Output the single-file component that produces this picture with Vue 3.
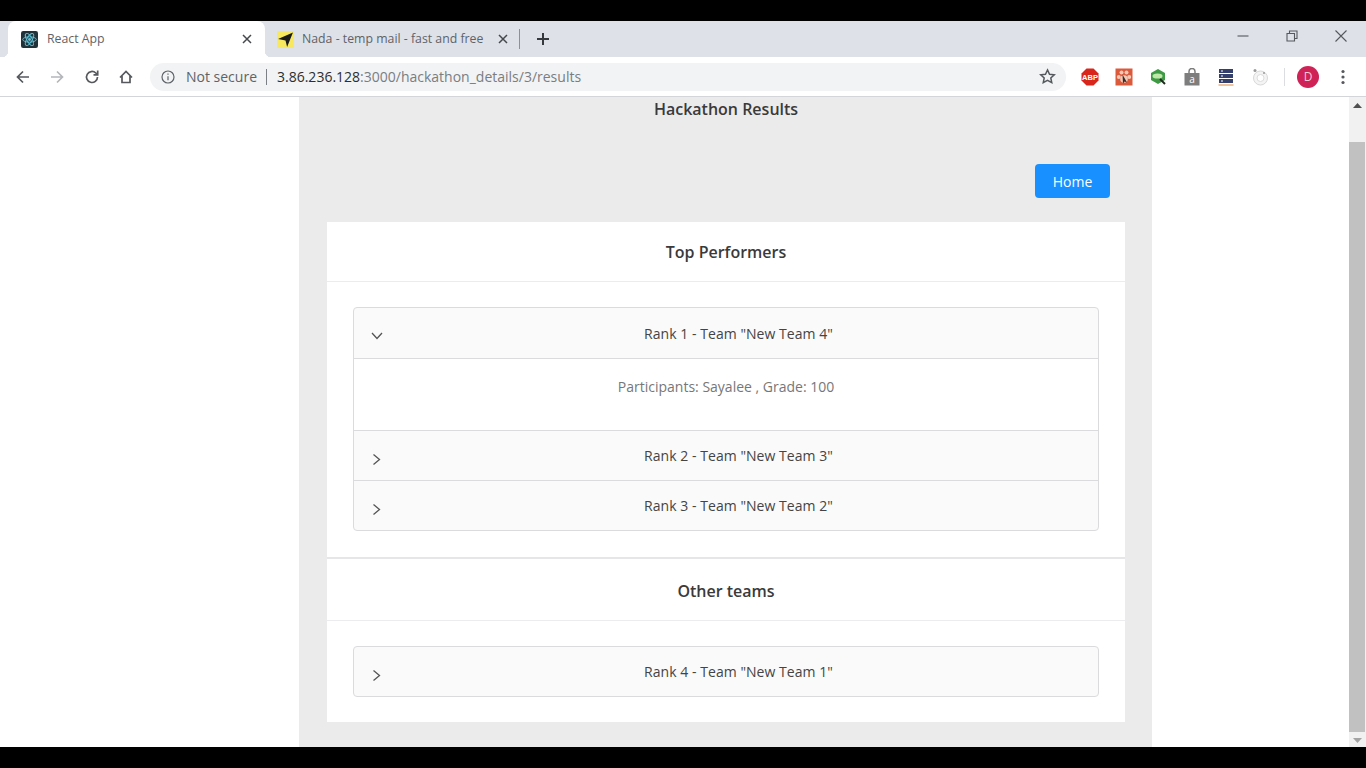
<template>
  <div class="screen">
    <div class="black-bar"></div>

    <div class="tab-strip">
      <div class="tab-edge"></div>
      <div class="tab active">
        <svg class="favicon" viewBox="0 0 16 16">
          <rect width="16" height="16" rx="2" fill="#20323a" />
          <g fill="none" stroke="#5fc3d8" stroke-width="0.9">
            <ellipse cx="8" cy="8" rx="6.4" ry="2.5" />
            <ellipse cx="8" cy="8" rx="6.4" ry="2.5" transform="rotate(60 8 8)" />
            <ellipse cx="8" cy="8" rx="6.4" ry="2.5" transform="rotate(120 8 8)" />
          </g>
          <circle cx="8" cy="8" r="1.4" fill="#5fc3d8" />
        </svg>
        <span class="tab-title">React App</span>
        <svg class="tab-close" viewBox="0 0 10 10"><path d="M1 1l8 8M9 1l-8 8" /></svg>
      </div>
      <div class="tab second">
        <svg class="favicon" viewBox="0 0 16 16">
          <rect width="16" height="16" fill="#f7e85f" />
          <path d="M1 7.500L15 1.500L9.500 15L8 9z" fill="#1b1b1b" />
        </svg>
        <span class="tab-title">Nada - temp mail - fast and free</span>
        <svg class="tab-close" viewBox="0 0 10 10"><path d="M1 1l8 8M9 1l-8 8" /></svg>
      </div>
      <div class="tab-sep"></div>
      <svg class="new-tab" viewBox="0 0 14 14"><path d="M7 1v12M1 7h12" /></svg>
      <div class="window-btns">
        <svg viewBox="0 0 12 12"><path d="M0.500 6h11" /></svg>
        <svg viewBox="0 0 12 12"><path d="M1 3.500h7.500v7.500H1zM3.500 3.500V1H11v7.500H8.500" /></svg>
        <svg viewBox="0 0 12 12"><path d="M0.500 0.500l11 11M11.500 0.500l-11 11" /></svg>
      </div>
    </div>

    <div class="toolbar">
      <svg class="nav-icon" viewBox="0 0 16 16"><path d="M14 8H2.500M8 2.500L2.500 8 8 13.500" /></svg>
      <svg class="nav-icon faded" viewBox="0 0 16 16"><path d="M2 8h11.500M8 2.500L13.500 8 8 13.500" /></svg>
      <svg class="nav-icon reload" viewBox="0 0 16 16"><path d="M13.500 8A5.500 5.500 0 1 1 11.800 4L13.500 5.600M13.700 1.600v4.200H9.500" /></svg>
      <svg class="nav-icon" viewBox="0 0 16 16"><path d="M2 8.500L8 2.500l6 6M4 7v6.500h8V7" /></svg>
      <div class="omnibox">
        <svg class="info-icon" viewBox="0 0 14 14">
          <circle cx="7" cy="7" r="6" />
          <path d="M7 6.200v4M7 3.600v1.200" />
        </svg>
        <span class="not-secure">Not secure</span>
        <span class="omni-sep"></span>
        <span class="url"><b>3.86.236.128</b>:3000/hackathon_details/3/results</span>
        <svg class="star" viewBox="0 0 16 16"><path d="M8 1.800l1.900 4.100 4.500.5-3.300 3 .9 4.400L8 11.600l-4 2.200.9-4.400-3.300-3 4.500-.5z" /></svg>
      </div>
      <div class="extensions">
        <svg viewBox="0 0 18 18">
          <path d="M5.500 0.500h7l5 5v7l-5 5h-7l-5-5v-7z" fill="#d9261c" />
          <text x="9" y="11.800" text-anchor="middle" class="abp">ABP</text>
        </svg>
        <svg viewBox="0 0 18 18">
          <rect x="0.500" y="0.500" width="17" height="17" fill="#dc5a3c" />
          <circle cx="6.500" cy="4.500" r="2" fill="#f3c9b6" />
          <circle cx="11.500" cy="4.500" r="2" fill="#f3c9b6" />
          <circle cx="3.800" cy="9" r="2" fill="#f3c9b6" />
          <circle cx="14.200" cy="9" r="2" fill="#f3c9b6" />
          <circle cx="9" cy="11" r="3.800" fill="#f3c9b6" />
          <path d="M7.500 6.500l4.500 8-2.400-1-1.600 2z" fill="#3a2a28" />
        </svg>
        <svg viewBox="0 0 18 18">
          <path d="M9 1l7 4v7l-7 4-7-4V5z" fill="#3f9a45" />
          <ellipse cx="8.500" cy="8" rx="5" ry="2.600" fill="#bfe7a8" />
          <path d="M11 11l5 5" stroke="#1f2a1f" stroke-width="2" />
        </svg>
        <svg viewBox="0 0 18 18">
          <path d="M1.500 5h15v12.500h-15z" fill="#7d7d7d" />
          <path d="M6 5.500V3.500a3 3 0 0 1 6 0v2" fill="none" stroke="#7d7d7d" stroke-width="1.500" />
          <text x="9" y="14.500" text-anchor="middle" class="bag-letter">a</text>
        </svg>
        <svg viewBox="0 0 18 18">
          <rect x="2" y="1" width="14" height="4" fill="#34406b" />
          <rect x="2" y="6" width="14" height="4" fill="#34406b" />
          <rect x="2" y="11" width="14" height="4" fill="#34406b" />
          <path d="M4 3h2M4 8h2M4 13h2" stroke="#fff" />
          <path d="M1.500 17h15" stroke="#e08a3c" />
        </svg>
        <svg viewBox="0 0 18 18">
          <circle cx="9.500" cy="10" r="7" fill="#f4f4f4" stroke="#d8d8d8" />
          <circle cx="9.500" cy="10" r="3.500" fill="#fff" stroke="#dcdcdc" />
          <circle cx="4" cy="2.500" r="1.500" fill="#9a9a9a" />
          <circle cx="13" cy="5" r="1" fill="#9a9a9a" />
        </svg>
      </div>
      <div class="toolbar-sep"></div>
      <div class="avatar">D</div>
      <svg class="kebab" viewBox="0 0 4 16">
        <circle cx="2" cy="2.500" r="1.600" />
        <circle cx="2" cy="8" r="1.600" />
        <circle cx="2" cy="13.500" r="1.600" />
      </svg>
    </div>

    <div class="page">
      <div class="panel">
        <h2 class="page-title">Hackathon Results</h2>
        <div class="actions">
          <button class="home-btn">Home</button>
        </div>
        <div class="card">
          <template v-for="(section, i) in sections" :key="section.title">
            <div class="card-head">{{ section.title }}</div>
            <div class="card-body" :class="{ last: i === sections.length - 1 }">
              <div class="collapse">
                <div v-for="team in section.teams" :key="team.rank" class="collapse-item">
                  <div class="collapse-head" :class="{ open: team.open }">
                    <svg class="arrow" viewBox="0 0 12 12">
                      <path :d="team.open ? 'M1 3l5 5.500 5-5.500' : 'M2.500 1.500l6 5-6 5'" />
                    </svg>
                    <span>Rank {{ team.rank }} - Team "{{ team.name }}"</span>
                  </div>
                  <div v-if="team.open" class="collapse-content">{{ team.detail }}</div>
                </div>
              </div>
            </div>
          </template>
        </div>
      </div>
      <div class="scrollbar">
        <svg viewBox="0 0 9 5"><path d="M4.500 0L9 5H0z" /></svg>
        <div class="scroll-thumb"></div>
        <svg viewBox="0 0 9 5"><path d="M0 0h9L4.500 5z" /></svg>
      </div>
    </div>

    <div class="black-bar"></div>
  </div>
</template>

<script setup>
const sections = [
  {
    title: 'Top Performers',
    teams: [
      { rank: 1, name: 'New Team 4', open: true, detail: 'Participants: Sayalee , Grade: 100' },
      { rank: 2, name: 'New Team 3' },
      { rank: 3, name: 'New Team 2' }
    ]
  },
  {
    title: 'Other teams',
    teams: [{ rank: 4, name: 'New Team 1' }]
  }
];
</script>

<style>
html, body {
  margin: 0;
  overflow: hidden;
}
</style>

<style scoped>
.screen {
  width: 1366px;
  height: 768px;
  display: flex;
  flex-direction: column;
  overflow: hidden;
  background: #fff;
  font-family: "Open Sans", "Noto Sans", sans-serif;
  color: #3a3a3a;
}
.black-bar {
  height: 21px;
  flex: none;
  background: #000;
}

/* tabs */
.tab-strip {
  height: 36px;
  flex: none;
  display: flex;
  align-items: stretch;
  background: #dee1e8;
}
.tab-edge {
  width: 8px;
}
.tab {
  width: 257px;
  flex: none;
  display: flex;
  align-items: center;
  padding: 0 13px 0 13px;
  box-sizing: border-box;
  font-size: 12.3px;
  color: #5f6368;
}
.tab.active {
  position: relative;
  background: #fff;
  border-radius: 8px 8px 0 0;
}
.tab.active::after {
  content: "";
  position: absolute;
  right: -6px;
  bottom: 0;
  width: 6px;
  height: 6px;
  background: radial-gradient(circle at 100% 0, transparent 6px, #fff 6.500px);
}
.tab.active::before {
  content: "";
  position: absolute;
  left: -6px;
  bottom: 0;
  width: 6px;
  height: 6px;
  background: radial-gradient(circle at 0 0, transparent 6px, #fff 6.500px);
}
.tab.second {
  width: 249px;
  padding: 0 6px 0 12px;
}
.favicon {
  width: 17px;
  height: 17px;
  flex: none;
  margin-right: 9px;
}
.tab.second .favicon {
  margin-right: 8px;
}
.tab-title {
  flex: 1;
  padding-bottom: 1px;
  white-space: nowrap;
  overflow: hidden;
}
.tab-close {
  width: 10px;
  height: 10px;
  flex: none;
  fill: none;
  stroke: #45484c;
  stroke-width: 1.500;
}
.tab-sep {
  width: 1px;
  height: 20px;
  align-self: center;
  background: #8d9096;
  margin-left: 5px;
}
.new-tab {
  width: 14px;
  height: 14px;
  align-self: center;
  margin-left: 16px;
  fill: none;
  stroke: #36393d;
  stroke-width: 2;
}
.window-btns {
  margin-left: auto;
  display: flex;
  gap: 37px;
  padding: 9px 19px 0 0;
}
.window-btns svg {
  width: 12px;
  height: 12px;
  fill: none;
  stroke: #55585c;
  stroke-width: 1.100;
}

/* toolbar */
.toolbar {
  height: 40px;
  flex: none;
  display: flex;
  align-items: center;
  padding-left: 15px;
  box-sizing: border-box;
  border-bottom: 1px solid #d4d5d8;
}
.nav-icon {
  width: 16px;
  height: 16px;
  flex: none;
  margin-right: 18px;
  fill: none;
  stroke: #55585c;
  stroke-width: 1.700;
}
.nav-icon.faded {
  stroke: #b4b6ba;
  margin-right: 19px;
}
.nav-icon.reload {
  margin-right: 18px;
}
.omnibox {
  width: 916px;
  height: 28px;
  flex: none;
  margin-left: -2px;
  display: flex;
  align-items: center;
  box-sizing: border-box;
  padding: 0 10px 0 11px;
  border-radius: 14px;
  background: #f1f3f4;
  font-size: 14px;
}
.info-icon {
  width: 14px;
  height: 14px;
  flex: none;
  fill: none;
  stroke: #5f6368;
  stroke-width: 1.200;
}
.not-secure {
  margin-left: 11px;
  color: #5f6368;
}
.omni-sep {
  width: 1px;
  height: 16px;
  margin: 0 10px 0 9px;
  background: #7c7f84;
}
.url {
  color: #7a7d82;
  white-space: nowrap;
}
.url b {
  font-weight: 400;
  color: #2c2e31;
}
.star {
  width: 17px;
  height: 17px;
  margin-left: auto;
  fill: none;
  stroke: #55585c;
  stroke-width: 1.400;
}
.extensions {
  display: flex;
  gap: 16px;
  margin-left: 15px;
}
.extensions svg {
  width: 18px;
  height: 18px;
  flex: none;
}
.abp {
  font-family: "Liberation Sans", sans-serif;
  font-size: 7.500px;
  font-weight: 700;
  fill: #fff;
}
.bag-letter {
  font-family: "Open Sans", sans-serif;
  font-size: 10px;
  fill: #fff;
}
.toolbar-sep {
  width: 1px;
  height: 18px;
  margin-left: 15px;
  background: #dcdde0;
}
.avatar {
  width: 22px;
  height: 22px;
  flex: none;
  margin-left: 12px;
  border-radius: 50%;
  background: #cf2257;
  color: #f6c9d6;
  font-size: 12px;
  line-height: 22px;
  text-align: center;
}
.kebab {
  width: 4px;
  height: 16px;
  margin-left: 22px;
  fill: #55585c;
}

/* page */
.page {
  flex: 1;
  min-height: 0;
  display: flex;
  padding-left: 299px;
  overflow: hidden;
}
.panel {
  width: 853px;
  flex: none;
  box-sizing: border-box;
  padding: 0 27px 0 28px;
  background: #ebebec;
}
.page-title {
  margin: 0;
  font-size: 16px;
  font-weight: 600;
  line-height: 24px;
  color: #3a3a3a;
  text-align: center;
}
.actions {
  display: flex;
  justify-content: flex-end;
  padding: 43px 15px 24px 0;
}
.home-btn {
  width: 75px;
  height: 34px;
  padding: 0;
  border: none;
  border-radius: 4px;
  background: #1890ff;
  color: #fff;
  font-family: inherit;
  font-size: 14px;
}
.card {
  background: #fff;
}
.card-head {
  height: 59px;
  line-height: 60px;
  font-size: 16px;
  font-weight: 600;
  color: #3a3a3a;
  text-align: center;
  border-bottom: 1px solid #ececee;
}
.card-body + .card-head {
  height: 61px;
  line-height: 64px;
}
.card-body {
  padding: 25px 26px 26px;
  border-bottom: 2px solid #e6e6e8;
}
.card-body.last {
  padding-bottom: 25px;
  border-bottom: none;
}
.collapse {
  border: 1px solid #dbdbdd;
  border-radius: 4px;
  background: #fafafa;
  overflow: hidden;
}
.collapse-item + .collapse-item {
  border-top: 1px solid #dbdbdd;
}
.collapse-head {
  height: 49px;
  position: relative;
  display: flex;
  align-items: center;
  justify-content: center;
  padding-left: 25px;
  box-sizing: border-box;
  font-size: 14px;
  letter-spacing: 0.04px;
  color: #444;
}
.collapse-head.open {
  height: 50px;
}
.arrow {
  position: absolute;
  left: 17px;
  top: 22px;
  width: 12px;
  height: 12px;
  fill: none;
  stroke: #555;
  stroke-width: 1.300;
}
.collapse-content {
  height: 72px;
  box-sizing: border-box;
  padding: 18px 0 0 0;
  border-top: 1px solid #dbdbdd;
  background: #fff;
  font-size: 14px;
  color: #777;
  text-align: center;
}

/* scrollbar */
.scrollbar {
  width: 17px;
  flex: none;
  margin-left: auto;
  padding-right: 1px;
  box-sizing: border-box;
  display: flex;
  flex-direction: column;
  align-items: center;
  background: #f1f1f1;
}
.scrollbar svg {
  width: 9px;
  height: 5px;
  flex: none;
  margin: 6px 0;
  fill: #505050;
}
.scroll-thumb {
  width: 100%;
  flex: 1;
  margin-top: 28px;
  background: #c1c1c1;
}
.scrollbar svg:last-child {
  margin: 6px 0 4px;
  fill: #a3a3a3;
}
</style>
